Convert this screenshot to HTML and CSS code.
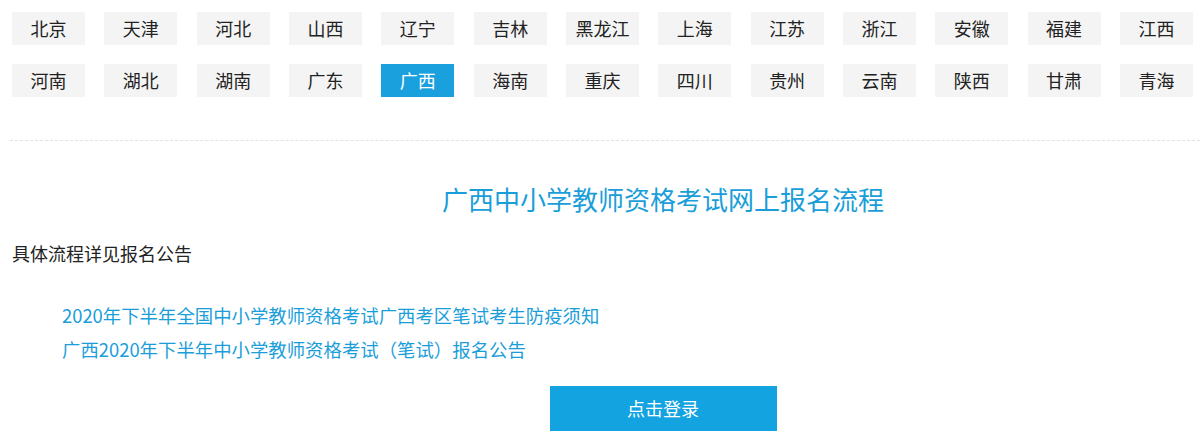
FILE: index.html
```html
<!DOCTYPE html>
<html lang="zh-CN">
<head>
    <meta charset="utf-8">
    <title>广西中小学教师资格考试网上报名流程</title>
    <link rel="stylesheet" href="styles.css">
</head>
<body>
<div id="regions">
    <a class="region" href="#">北京</a>
    <a class="region" href="#">天津</a>
    <a class="region" href="#">河北</a>
    <a class="region" href="#">山西</a>
    <a class="region" href="#">辽宁</a>
    <a class="region" href="#">吉林</a>
    <a class="region" href="#">黑龙江</a>
    <a class="region" href="#">上海</a>
    <a class="region" href="#">江苏</a>
    <a class="region" href="#">浙江</a>
    <a class="region" href="#">安徽</a>
    <a class="region" href="#">福建</a>
    <a class="region" href="#">江西</a>
    <a class="region" href="#">河南</a>
    <a class="region" href="#">湖北</a>
    <a class="region" href="#">湖南</a>
    <a class="region" href="#">广东</a>
    <a class="region active" href="#">广西</a>
    <a class="region" href="#">海南</a>
    <a class="region" href="#">重庆</a>
    <a class="region" href="#">四川</a>
    <a class="region" href="#">贵州</a>
    <a class="region" href="#">云南</a>
    <a class="region" href="#">陕西</a>
    <a class="region" href="#">甘肃</a>
    <a class="region" href="#">青海</a>
</div>

<div class="divider"></div>

<div id="content">
    <h2 class="title">广西中小学教师资格考试网上报名流程</h2>
    <p class="intro">具体流程详见报名公告</p>
    <ul class="links">
        <li><a href="#">2020年下半年全国中小学教师资格考试广西考区笔试考生防疫须知</a></li>
        <li><a href="#">广西2020年下半年中小学教师资格考试（笔试）报名公告</a></li>
    </ul>
    <div class="login-wrap">
        <a class="login-btn" href="#">点击登录</a>
    </div>
</div>
</body>
</html>
```

FILE: styles.css
```css
html {
    overflow: hidden;
}

body {
    margin: 0;
    padding: 0;
    background: #fff;
    color: #222;
    font-family: "Noto Sans CJK SC", "Liberation Sans", sans-serif;
}

a {
    text-decoration: none;
}

#regions {
    display: grid;
    grid-template-columns: repeat(13, 73px);
    column-gap: 19.33px;
    row-gap: 19px;
    padding: 12px 7px 0 12px;
}

.region {
    display: block;
    height: 33px;
    line-height: 33px;
    background: #f4f4f4;
    color: #222;
    font-size: 18px;
    text-align: center;
}

.region.active {
    background: #1aa0dc;
    color: #fff;
}

.divider {
    margin: 43px 0 0 10px;
    border-top: 1px dashed #e2e2e2;
}

.title {
    margin: 40px 0 0 0;
    padding-left: 126px;
    font-size: 26px;
    font-weight: normal;
    line-height: 36px;
    color: #1a9ed9;
    text-align: center;
}

.intro {
    margin: 23px 0 0 12px;
    font-size: 18px;
    line-height: 26px;
    color: #222;
}

.links {
    list-style: none;
    margin: 32px 0 0 0;
    padding: 0 0 0 62px;
}

.links li {
    line-height: 34px;
    font-size: 18.4px;
}

.links a {
    color: #1a9ed9;
}

.login-wrap {
    margin-top: 20px;
    padding-left: 126px;
    display: flex;
    justify-content: center;
}

.login-btn {
    display: block;
    width: 227px;
    height: 45px;
    line-height: 45px;
    background: #13a3e1;
    color: #fff;
    font-size: 18px;
    text-align: center;
}
```
